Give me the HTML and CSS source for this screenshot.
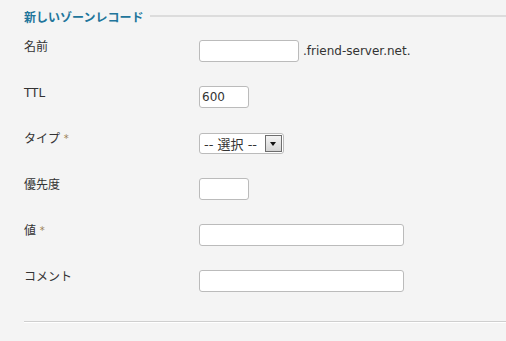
FILE: index.html
```html
<!DOCTYPE html>
<html lang="ja">
<head>
    <meta charset="UTF-8">
    <title>新しいゾーンレコード</title>
    <link rel="stylesheet" href="styles.css">
</head>
<body>
    <div class="record-form">
        <div class="legend">
            <span class="legend-title">新しいゾーンレコード</span>
            <span class="legend-line"></span>
        </div>

        <div class="form-rows">
            <label class="form-label">名前</label>
            <div class="form-field">
                <input type="text" class="text-input input-name">
                <span class="suffix">.friend-server.net.</span>
            </div>

            <label class="form-label">TTL</label>
            <div class="form-field">
                <input type="text" class="text-input input-short" value="600">
            </div>

            <label class="form-label">タイプ <span class="required">*</span></label>
            <div class="form-field">
                <div class="select-box">
                    <span class="select-text">-- 選択 --</span>
                    <span class="select-arrow"></span>
                </div>
            </div>

            <label class="form-label">優先度</label>
            <div class="form-field">
                <input type="text" class="text-input input-short">
            </div>

            <label class="form-label">値 <span class="required">*</span></label>
            <div class="form-field">
                <input type="text" class="text-input input-wide">
            </div>

            <label class="form-label">コメント</label>
            <div class="form-field">
                <input type="text" class="text-input input-wide">
            </div>
        </div>

        <hr class="form-end">
    </div>
</body>
</html>
```

FILE: styles.css
```css
body {
    margin: 0;
    background-color: #f4f4f4;
    font-family: "DejaVu Sans", "Noto Sans CJK JP", sans-serif;
    font-size: 12px;
    color: #333;
}
.record-form {
    padding: 8px 0 0 24px;
}
.legend {
    display: flex;
    align-items: center;
    gap: 7px;
    height: 16px;
}
.legend-title {
    font-weight: bold;
    color: #21759b;
    font-size: 12px;
}
.legend-line {
    flex: 1;
    height: 2px;
    background-color: #dcdcdc;
}
.form-rows {
    display: grid;
    grid-template-columns: 175px auto;
    grid-auto-rows: 22px;
    row-gap: 24px;
    margin-top: 16px;
}
.form-label {
    line-height: 14px;
}
.required {
    color: #9a7f55;
    font-size: 10px;
    vertical-align: top;
}
.form-field {
    display: flex;
    align-items: center;
    gap: 4px;
}
.text-input {
    box-sizing: border-box;
    height: 22px;
    margin: 0;
    padding: 1px 2px;
    border: 1px solid #bbb;
    border-radius: 3px;
    background-color: #fff;
    font-family: inherit;
    font-size: 12px;
    color: #333;
}
.input-name {
    width: 100px;
}
.input-short {
    width: 50px;
}
.input-wide {
    width: 205px;
}
.suffix {
    color: #333;
}
.select-box {
    box-sizing: border-box;
    display: flex;
    align-items: center;
    justify-content: space-between;
    width: 85px;
    height: 21px;
    padding: 0 1px 0 4px;
    border: 1px solid #bbb;
    border-radius: 3px;
    background-color: #fff;
}
.select-text {
    white-space: nowrap;
    font-size: 13px;
}
.select-arrow {
    position: relative;
    box-sizing: border-box;
    width: 17px;
    height: 17px;
    border: 1px solid #6e6e6e;
    background: linear-gradient(#f4f4f4, #d4d4d4);
}
.select-arrow:after {
    content: "";
    position: absolute;
    left: 4px;
    top: 6px;
    border-left: 3.5px solid transparent;
    border-right: 3.5px solid transparent;
    border-top: 4px solid #111;
}
.form-end {
    margin: 29px 0 0 0;
    border: none;
    border-top: 1px solid #cfcfcf;
    border-bottom: 1px solid #fff;
}
```
